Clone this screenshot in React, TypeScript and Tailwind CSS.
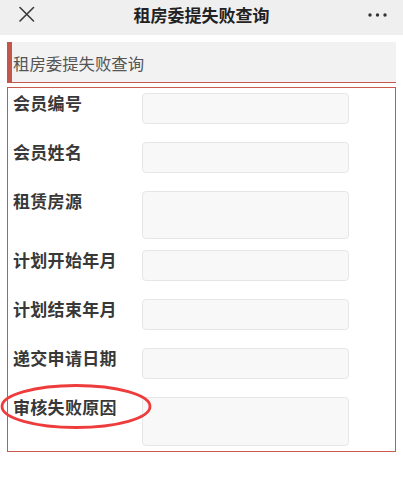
import React from "react";

const rows: { label: string; h: number; mb: number }[] = [
  { label: "会员编号", h: 31, mb: 18 },
  { label: "会员姓名", h: 31, mb: 18 },
  { label: "租赁房源", h: 48, mb: 11 },
  { label: "计划开始年月", h: 31, mb: 18 },
  { label: "计划结束年月", h: 31, mb: 18 },
  { label: "递交申请日期", h: 31, mb: 18 },
  { label: "审核失败原因", h: 49, mb: 5 },
];

export default function App() {
  return (
    <div
      className="relative w-[403px] h-[485px] bg-white overflow-hidden"
      style={{ fontFamily: '"Noto Sans CJK SC", "Noto Sans", sans-serif' }}
    >
      {/* top bar */}
      <div className="h-[35px] bg-[#efefef] flex items-center justify-between pl-[18px] pr-[15px]">
        <svg width="17" height="17" viewBox="0 0 17 17" className="mt-[-6px]">
          <path d="M2 1.5 L15.5 15 M15.5 1.5 L2 15" stroke="#3a3a3a" strokeWidth="1.6" strokeLinecap="round" />
        </svg>
        <div className="text-[17px] leading-[20px] font-bold text-[#222] mt-[-6px]">租房委提失败查询</div>
        <svg width="20" height="6" viewBox="0 0 20 6" className="mt-[-6px]">
          <circle cx="2" cy="3" r="1.7" fill="#333" />
          <circle cx="9.5" cy="3" r="1.7" fill="#333" />
          <circle cx="17" cy="3" r="1.7" fill="#333" />
        </svg>
      </div>

      {/* section heading */}
      <div className="mt-[7px] mx-[7px] h-[41px] bg-[#f2f2f2] border-solid border-l-[5px] border-b border-[color:#c4574c] flex items-center pl-[1px]">
        <span className="text-[16.4px] leading-[20px] text-[#555] mt-[2px]">租房委提失败查询</span>
      </div>

      {/* form box */}
      <div className="mt-[4px] mx-[7px] border-solid border-x border-y border-x-[#c8584c] border-y-[#c8584c] pt-[5px]">
        {rows.map((r) => (
          <div key={r.label} className="flex" style={{ marginBottom: r.mb }}>
            <div className="w-[134px] pl-[5px] text-[17px] leading-[20px] font-bold text-[#383838] tracking-[0.3px]">
              {r.label}
            </div>
            <div
              className="w-[207px] bg-[#f8f8f8] border border-solid border-[color:#e6e6e6] rounded-[4px]"
              style={{ height: r.h }}
            />
          </div>
        ))}
      </div>

      {/* annotation ellipse */}
      <svg className="absolute left-0 top-[383px]" width="156" height="48" viewBox="0 0 156 48">
        <ellipse cx="76" cy="23.5" rx="74" ry="21" fill="none" stroke="#ee3b3b" strokeWidth="2.8" />
      </svg>
    </div>
  );
}
